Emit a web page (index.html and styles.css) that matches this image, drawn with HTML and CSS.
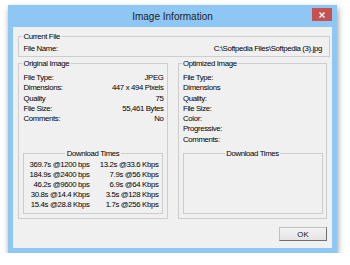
FILE: index.html
```html
<!DOCTYPE html>
<html>
<head>
<meta charset="utf-8">
<link rel="stylesheet" href="styles.css">
</head>
<body>
<div class="window">
  <div class="titlebar">
    <span></span>
    <span class="title">Image Information</span>
    <span class="close"><svg width="6" height="6" viewBox="0 0 6 6"><path d="M0.5 0.5L5.5 5.5M5.5 0.5L0.5 5.5" stroke="#fff" stroke-width="1.4"/></svg></span>
  </div>
  <div class="client">
    <section class="group current">
      <div class="group-label">Current File</div>
      <div class="row"><span>File Name:</span><span>C:\Softpedia Files\Softpedia (3).jpg</span></div>
    </section>
    <div class="columns">
      <section class="group">
        <div class="group-label">Original Image</div>
        <div class="props">
          <div class="prop"><span>File Type:</span><span>JPEG</span></div>
          <div class="prop"><span>Dimensions:</span><span>447 x 494 Pixels</span></div>
          <div class="prop"><span>Quality</span><span>75</span></div>
          <div class="prop"><span>File Size:</span><span>55,461 Bytes</span></div>
          <div class="prop"><span>Comments:</span><span>No</span></div>
        </div>
        <div class="dl">
          <div class="group-label centered">Download Times</div>
          <div class="times">
            <span>369.7s @1200 bps</span><span>13.2s @33.6 Kbps</span>
            <span>184.9s @2400 bps</span><span>7.9s @56 Kbps</span>
            <span>46.2s @9600 bps</span><span>6.9s @64 Kbps</span>
            <span>30.8s @14.4 Kbps</span><span>3.5s @128 Kbps</span>
            <span>15.4s @28.8 Kbps</span><span>1.7s @256 Kbps</span>
          </div>
        </div>
      </section>
      <section class="group">
        <div class="group-label">Optimized Image</div>
        <div class="props">
          <div class="prop"><span>File Type:</span></div>
          <div class="prop"><span>Dimensions</span></div>
          <div class="prop"><span>Quality:</span></div>
          <div class="prop"><span>File Size:</span></div>
          <div class="prop"><span>Color:</span></div>
          <div class="prop"><span>Progressive:</span></div>
          <div class="prop"><span>Comments:</span></div>
        </div>
        <div class="dl">
          <div class="group-label centered">Download Times</div>
        </div>
      </section>
    </div>
    <div class="footer"><button class="ok">OK</button></div>
  </div>
</div>
</body>
</html>
```
FILE: styles.css
```css
body {
  margin: 0;
  background: #fff;
  font-family: "Liberation Sans", Arial, sans-serif;
}
.window {
  margin: 5px 0 0 8px;
  width: 329px;
  height: 248px;
  box-sizing: border-box;
  background: #8ec6f4;
  padding: 0 5px 5px;
  display: flex;
  flex-direction: column;
  box-shadow: 1px 3px 6px rgba(0, 0, 0, 0.4);
}
.titlebar {
  height: 22px;
  flex: none;
  display: grid;
  grid-template-columns: 1fr auto 1fr;
  align-items: center;
}
.title {
  font-size: 10px;
  color: #222;
}
.close {
  justify-self: end;
  align-self: start;
  margin-top: 3px;
  width: 20px;
  height: 13px;
  background: #c75050;
  display: flex;
  align-items: center;
  justify-content: center;
}
.client {
  flex: 1;
  background: #f0f0f0;
  display: flex;
  flex-direction: column;
  padding: 9px 2px 7px 5px;
  font-size: 7.8px;
  letter-spacing: -0.35px;
  color: #000;
}
.group {
  border: 1px solid #cdcdcd;
}
.group-label {
  width: fit-content;
  margin: -6px 0 0 3px;
  padding: 0 1.5px;
  background: #f0f0f0;
  line-height: 11px;
  white-space: nowrap;
}
.group-label.centered {
  margin: -6px auto 0;
}
.current .row {
  display: flex;
  justify-content: space-between;
  line-height: 11px;
  margin-top: 1px;
  padding: 0 7px 2px 4.5px;
}
.columns {
  display: grid;
  grid-template-columns: 1fr 1fr;
  column-gap: 10px;
  height: 156px;
  margin-top: 6px;
  margin-right: 3px;
}
.columns .group {
  display: flex;
  flex-direction: column;
}
.props {
  padding: 4px 3px 0 4.5px;
  line-height: 10.3px;
}
.prop {
  display: flex;
  justify-content: space-between;
}
.dl {
  margin: auto 3.5px 4px 4px;
  height: 61px;
  box-sizing: border-box;
  border: 1px solid #cdcdcd;
}
.times {
  display: grid;
  grid-template-columns: 65.5px 69px;
  line-height: 10px;
  padding-top: 1px;
  text-align: right;
  white-space: nowrap;
}
.footer {
  display: flex;
  justify-content: flex-end;
  margin-top: 8px;
  padding-right: 3px;
}
.ok {
  width: 48px;
  height: 14px;
  padding: 0;
  font: inherit;
  letter-spacing: 0;
  color: #111;
  background: linear-gradient(#f2f2f2, #e4e4e4);
  border: 1px solid;
  border-color: #c0c0c0 #6e6e6e #6e6e6e #c0c0c0;
}
```
